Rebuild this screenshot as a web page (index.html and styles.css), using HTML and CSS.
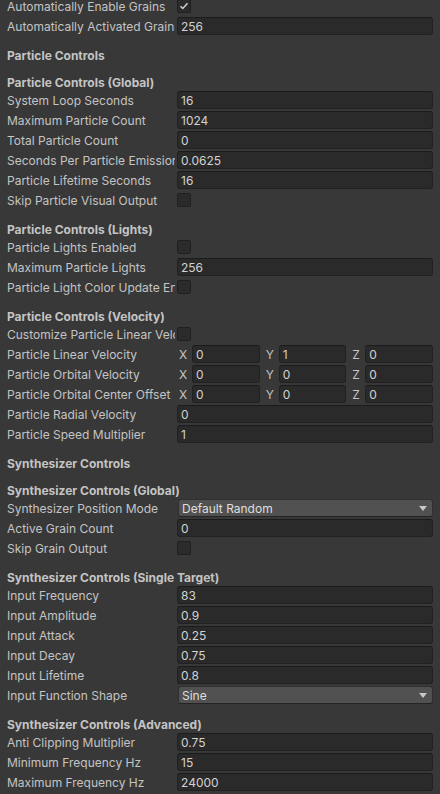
FILE: index.html
```html
<!DOCTYPE html>
<html>
<head>
<meta charset="utf-8">
<link rel="stylesheet" href="styles.css">
</head>
<body>
<div class="inspector">
  <div class="row"><div class="label">Automatically Enable Grains</div><div class="checkbox"><svg viewBox="0 0 14 14" width="14" height="14"><path d="M3.5 7.2 L5.8 9.5 L10.5 4.2" fill="none" stroke="#d2d2d2" stroke-width="1.5"/></svg></div></div>
  <div class="row"><div class="label">Automatically Activated Grains</div><div class="field">256</div></div>

  <div class="header">Particle Controls</div>
  <div class="header">Particle Controls (Global)</div>
  <div class="row"><div class="label">System Loop Seconds</div><div class="field">16</div></div>
  <div class="row"><div class="label">Maximum Particle Count</div><div class="field">1024</div></div>
  <div class="row"><div class="label">Total Particle Count</div><div class="field">0</div></div>
  <div class="row"><div class="label">Seconds Per Particle Emission</div><div class="field">0.0625</div></div>
  <div class="row"><div class="label">Particle Lifetime Seconds</div><div class="field">16</div></div>
  <div class="row"><div class="label">Skip Particle Visual Output</div><div class="checkbox"></div></div>

  <div class="header">Particle Controls (Lights)</div>
  <div class="row"><div class="label">Particle Lights Enabled</div><div class="checkbox"></div></div>
  <div class="row"><div class="label">Maximum Particle Lights</div><div class="field">256</div></div>
  <div class="row"><div class="label">Particle Light Color Update Enabled</div><div class="checkbox"></div></div>

  <div class="header">Particle Controls (Velocity)</div>
  <div class="row"><div class="label">Customize Particle Linear Velocity</div><div class="checkbox"></div></div>
  <div class="row"><div class="label">Particle Linear Velocity</div>
    <div class="vec">
      <div class="comp"><span class="axis">X</span><div class="field">0</div></div>
      <div class="comp"><span class="axis">Y</span><div class="field">1</div></div>
      <div class="comp"><span class="axis">Z</span><div class="field">0</div></div>
    </div>
  </div>
  <div class="row"><div class="label">Particle Orbital Velocity</div>
    <div class="vec">
      <div class="comp"><span class="axis">X</span><div class="field">0</div></div>
      <div class="comp"><span class="axis">Y</span><div class="field">0</div></div>
      <div class="comp"><span class="axis">Z</span><div class="field">0</div></div>
    </div>
  </div>
  <div class="row"><div class="label">Particle Orbital Center Offset</div>
    <div class="vec">
      <div class="comp"><span class="axis">X</span><div class="field">0</div></div>
      <div class="comp"><span class="axis">Y</span><div class="field">0</div></div>
      <div class="comp"><span class="axis">Z</span><div class="field">0</div></div>
    </div>
  </div>
  <div class="row"><div class="label">Particle Radial Velocity</div><div class="field">0</div></div>
  <div class="row"><div class="label">Particle Speed Multiplier</div><div class="field">1</div></div>

  <div class="header">Synthesizer Controls</div>
  <div class="header">Synthesizer Controls (Global)</div>
  <div class="row"><div class="label">Synthesizer Position Mode</div><div class="popup"><span>Default Random</span><span class="arrow"></span></div></div>
  <div class="row"><div class="label">Active Grain Count</div><div class="field">0</div></div>
  <div class="row"><div class="label">Skip Grain Output</div><div class="checkbox"></div></div>

  <div class="header">Synthesizer Controls (Single Target)</div>
  <div class="row"><div class="label">Input Frequency</div><div class="field">83</div></div>
  <div class="row"><div class="label">Input Amplitude</div><div class="field">0.9</div></div>
  <div class="row"><div class="label">Input Attack</div><div class="field">0.25</div></div>
  <div class="row"><div class="label">Input Decay</div><div class="field">0.75</div></div>
  <div class="row"><div class="label">Input Lifetime</div><div class="field">0.8</div></div>
  <div class="row"><div class="label">Input Function Shape</div><div class="popup"><span>Sine</span><span class="arrow"></span></div></div>

  <div class="header">Synthesizer Controls (Advanced)</div>
  <div class="row"><div class="label">Anti Clipping Multiplier</div><div class="field">0.75</div></div>
  <div class="row"><div class="label">Minimum Frequency Hz</div><div class="field">15</div></div>
  <div class="row"><div class="label">Maximum Frequency Hz</div><div class="field">24000</div></div>
</div>
</body>
</html>
```
FILE: styles.css
```css
html, body {
  margin: 0;
  padding: 0;
  background: #383838;
  overflow: hidden;
}
body {
  font-family: Inter, "Noto Sans", sans-serif;
  font-size: 12px;
  color: #c4c4c4;
}
.inspector {
  display: flex;
  flex-direction: column;
  margin-top: -3px;
  padding: 0 7px 0 7px;
}
.row {
  display: flex;
  align-items: center;
  height: 18px;
  margin-bottom: 2px;
  flex: none;
}
.label {
  width: 168px;
  height: 18px;
  box-sizing: border-box;
  margin-right: 2px;
  flex: none;
  white-space: nowrap;
  overflow: hidden;
  padding-top: 1px;
  line-height: 17px;
}
.header {
  height: 18px;
  box-sizing: border-box;
  padding-top: 1px;
  line-height: 17px;
  margin-top: 9px;
  font-weight: bold;
  flex: none;
  white-space: nowrap;
}
.field {
  flex: 1;
  min-width: 0;
  height: 18px;
  box-sizing: border-box;
  background: #2a2a2a;
  border: 1px solid #212121;
  border-top-color: #1b1b1b;
  border-radius: 3px;
  padding: 1px 3px 0 3px;
  line-height: 15px;
  color: #d2d2d2;
  white-space: nowrap;
  overflow: hidden;
}
.checkbox {
  width: 14px;
  height: 14px;
  box-sizing: border-box;
  background: #2b2b2b;
  border: 1px solid #202020;
  border-radius: 2px;
  flex: none;
  position: relative;
}
.checkbox svg {
  position: absolute;
  left: -1px;
  top: -1px;
}
.vec {
  flex: 1;
  display: grid;
  grid-template-columns: 1fr 1fr 1fr;
  column-gap: 4px;
  height: 18px;
}
.comp {
  display: flex;
  align-items: center;
  min-width: 0;
}
.axis {
  width: 15px;
  height: 18px;
  box-sizing: border-box;
  flex: none;
  padding: 1px 0 0 2px;
  line-height: 17px;
}
.popup {
  flex: 1;
  height: 18px;
  box-sizing: border-box;
  margin-left: 1px;
  background: #515151;
  border: 1px solid #303030;
  border-bottom-color: #242424;
  border-radius: 3px;
  padding: 1px 5px 0 3px;
  display: flex;
  align-items: center;
  justify-content: space-between;
  color: #dedede;
  line-height: 15px;
}
.arrow {
  width: 0;
  height: 0;
  margin-top: -1px;
  border-left: 4px solid transparent;
  border-right: 4px solid transparent;
  border-top: 5px solid #c8c8c8;
}
```
